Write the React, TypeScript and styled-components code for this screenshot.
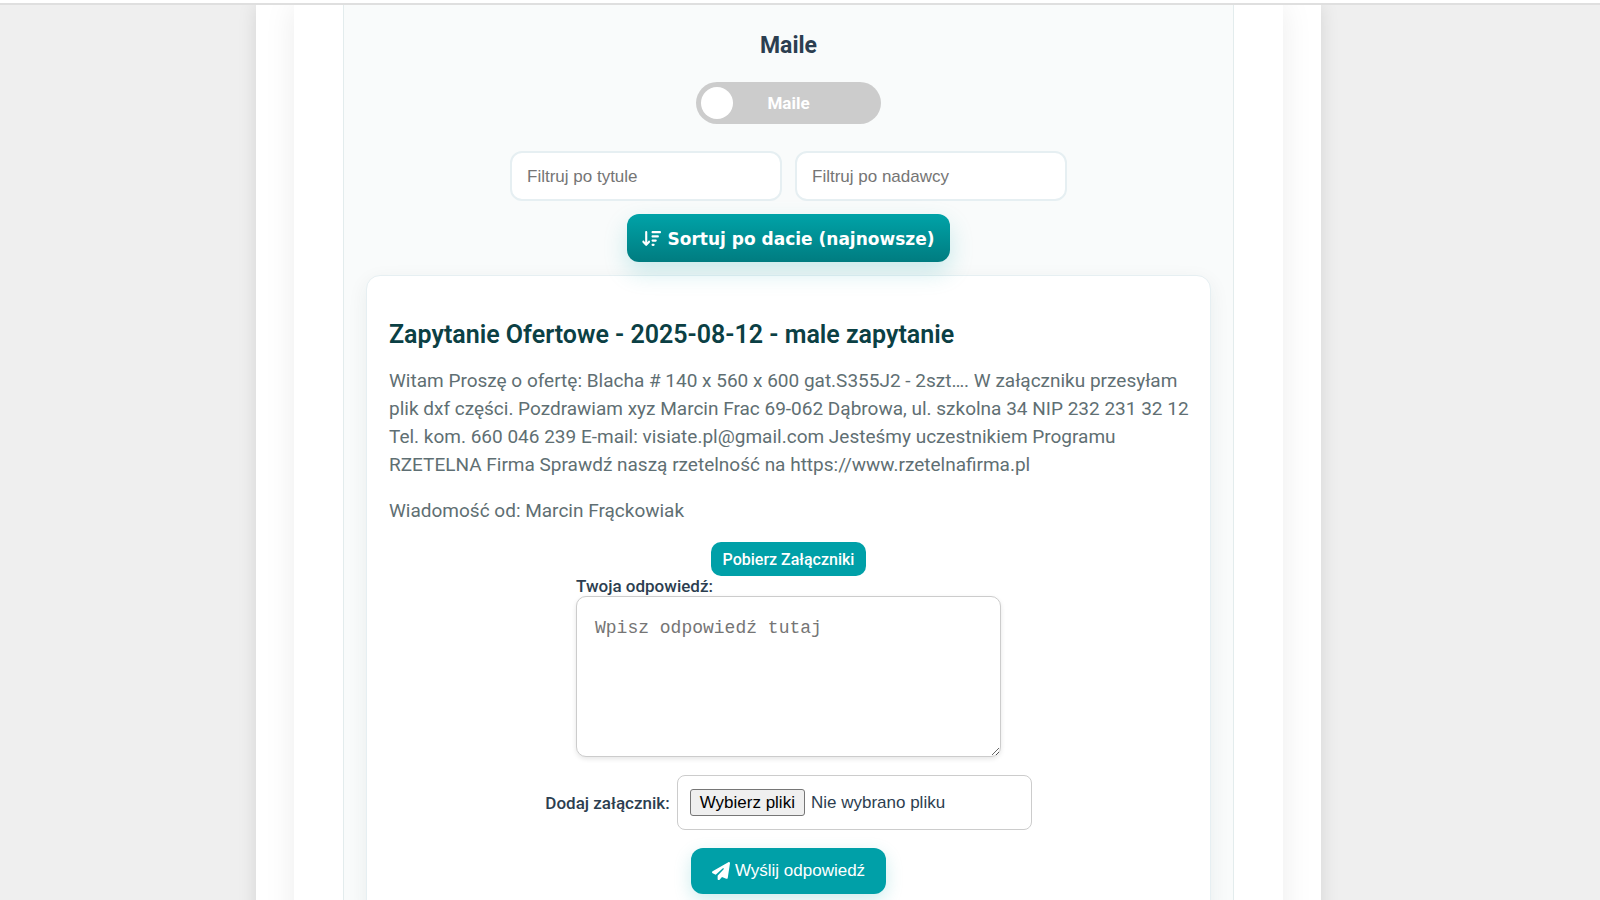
import React, { useState } from "react";
import styled, { createGlobalStyle } from "styled-components";
import { FaPaperPlane } from "react-icons/fa6";

const GlobalStyle = createGlobalStyle`
  *, *::before, *::after { box-sizing: border-box; }
  body {
    margin: 0;
    background: #efefef;
    color: #2c3e50;
    font-family: Roboto, "Liberation Sans", sans-serif;
    font-size: 17px;
    line-height: 20px;
  }
`;

const TopBar = styled.header`
  position: sticky;
  top: 0;
  z-index: 10;
  height: 5px;
  background: #fff;
  border-bottom: 2px solid #dfdfdf;
`;

const Page = styled.div`
  padding-right: 23px;
`;

const Shell = styled.div`
  max-width: 1065px;
  margin: 0 auto;
  padding: 0 38px;
  background: #fff;
  box-shadow: 0 0 18px rgba(0, 0, 0, 0.11);
  overflow: clip;
  overflow-clip-margin: 20px;
`;

const Content = styled.main`
  padding: 0 49px;
  background: #fff;
  box-shadow: 0 0 30px rgba(0, 0, 0, 0.08);
`;

const MailPanel = styled.section`
  display: flex;
  flex-direction: column;
  align-items: center;
  padding: 24px 22px;
  background: #f9fbfb;
  border: solid #e3eced;
  border-width: 0 1px;
`;

const PanelTitle = styled.h2`
  margin: 0 0 19px;
  font-size: 23px;
  line-height: 34px;
  font-weight: 700;
`;

const Toggle = styled.label`
  display: grid;
  align-items: center;
  width: 185px;
  height: 42px;
  margin-bottom: 27px;
  padding: 0 5px;
  border-radius: 21px;
  background: #ccc;
  color: #fff;
  font-weight: 700;
  cursor: pointer;
`;

const ToggleInput = styled.input`
  grid-area: 1 / 1;
  appearance: none;
  width: 32px;
  height: 32px;
  margin: 0;
  border-radius: 50%;
  background: #fff;
  cursor: pointer;

  &:checked {
    justify-self: end;
  }
`;

const ToggleText = styled.span`
  grid-area: 1 / 1;
  justify-self: center;
`;

const Filters = styled.div`
  display: flex;
  flex-wrap: wrap;
  justify-content: center;
  gap: 13px;
  margin-bottom: 13px;
`;

const FilterInput = styled.input`
  width: 272px;
  height: 50px;
  padding: 1px 15px 0;
  border: 2px solid #e6eff2;
  border-radius: 12px;
  background: #fff;
  font-family: "Liberation Sans", Arial, sans-serif;
  font-size: 17px;

  &::placeholder {
    color: #757575;
  }
`;

const SortButton = styled.button`
  position: relative;
  display: inline-flex;
  align-items: center;
  justify-content: center;
  gap: 6px;
  height: 48px;
  margin-bottom: 13px;
  padding: 1px 15px 0;
  border: 0;
  border-radius: 12px;
  background: linear-gradient(180deg, #00a3a8, #007c80);
  box-shadow: 0 10px 24px rgba(0, 163, 168, 0.2);
  color: #fff;
  font-family: "Arial Black", "DejaVu Sans", sans-serif;
  font-size: 17px;
  font-weight: 900;
  cursor: pointer;
`;

const MailCard = styled.article`
  width: 100%;
  padding: 42px 18px 24px;
  border: 1px solid #e6eff2;
  border-radius: 14px;
  background: #fff;
  box-shadow: 0 6px 20px rgba(0, 60, 60, 0.07);
`;

const MailTitle = styled.h3`
  margin: 0 0 15px;
  padding-left: 4px;
  color: #0b4044;
  font-size: 25px;
  line-height: 34px;
  font-weight: 600;
`;

const MailText = styled.p`
  margin: 0 0 18px;
  padding-left: 4px;
  color: #5f6f73;
  font-size: 19px;
  line-height: 28px;

  & + & {
    margin-bottom: 17px;
  }
`;

const ReplyForm = styled.form`
  display: flex;
  flex-direction: column;
  align-items: center;
`;

const DownloadButton = styled.button`
  height: 34px;
  padding: 0 12px;
  border: 0;
  border-radius: 10px;
  background: #00a0a8;
  color: #fff;
  font-family: inherit;
  font-size: 16px;
  font-weight: 500;
  cursor: pointer;
`;

const ReplyField = styled.div`
  display: flex;
  flex-direction: column;
  width: 425px;
  max-width: 100%;
  margin-bottom: 18px;
`;

const FieldLabel = styled.label`
  font-weight: 500;
`;

const ReplyArea = styled.textarea`
  display: block;
  width: 100%;
  height: 161px;
  padding: 20px 18px;
  border: 1px solid #ccc;
  border-radius: 10px;
  background: #fff;
  box-shadow: 0 2px 5px rgba(0, 0, 0, 0.1);
  font-family: Consolas, "Liberation Mono", monospace;
  font-size: 18px;
  line-height: 22px;
  resize: both;

  &::placeholder {
    color: #757575;
  }
`;

const FileRow = styled.div`
  display: flex;
  align-items: center;
  gap: 7px;
  margin-bottom: 18px;
`;

const FileBox = styled.div`
  position: relative;
  display: flex;
  align-items: center;
  gap: 6px;
  width: 355px;
  height: 55px;
  padding: 0 12px;
  border: 1px solid #ccc;
  border-radius: 8px;
  background: #fff;
  font-family: "Liberation Sans", Arial, sans-serif;
`;

const FileInput = styled.input`
  position: absolute;
  inset: 0;
  width: 100%;
  height: 100%;
  opacity: 0;
  cursor: pointer;
`;

const FileButton = styled.span`
  padding: 3px 9px;
  border: 1px solid #767676;
  border-radius: 3px;
  background: #efefef;
  color: #000;
  line-height: 19px;
`;

const SendButton = styled.button`
  display: inline-flex;
  align-items: center;
  gap: 5px;
  height: 46px;
  padding: 0 21px;
  border: 0;
  border-radius: 12px;
  background: #00a0a8;
  box-shadow: 0 6px 18px rgba(0, 163, 168, 0.2);
  color: #fff;
  font-family: "Liberation Sans", Arial, sans-serif;
  font-size: 17px;
  cursor: pointer;
`;

function SortIcon() {
  return (
    <svg width="19" height="17" viewBox="0 0 576 512" fill="currentColor" aria-hidden="true">
      <path d="M416 288h-95.1c-17.67 0-32 14.33-32 32s14.33 32 32 32H416c17.67 0 32-14.33 32-32S433.7 288 416 288zM544 32h-223.1c-17.67 0-32 14.33-32 32s14.33 32 32 32H544c17.67 0 32-14.33 32-32S561.7 32 544 32zM352 416h-32c-17.67 0-32 14.33-32 32s14.33 32 32 32h32c17.67 0 32-14.33 32-32S369.7 416 352 416zM480 160h-159.1c-17.67 0-32 14.33-32 32s14.33 32 32 32H480c17.67 0 32-14.33 32-32S497.7 160 480 160zM192.4 330.7L160 366.1V64.03C160 46.33 145.7 32 128 32S96 46.33 96 64.03v302L63.6 330.7c-6.312-6.883-14.94-10.38-23.61-10.38c-7.719 0-15.47 2.781-21.61 8.414c-13.03 11.95-13.9 32.22-1.969 45.27l87.1 96.09c12.12 13.26 35.06 13.26 47.19 0l87.1-96.09c11.94-13.05 11.06-33.31-1.969-45.27C224.6 316.8 204.4 317.7 192.4 330.7z" />
    </svg>
  );
}

export default function App() {
  const [files, setFiles] = useState("Nie wybrano pliku");

  return (
    <>
      <GlobalStyle />
      <TopBar />
      <Page>
        <Shell>
          <Content>
            <MailPanel>
              <PanelTitle>Maile</PanelTitle>
              <Toggle>
                <ToggleInput type="checkbox" />
                <ToggleText>Maile</ToggleText>
              </Toggle>
              <Filters>
                <FilterInput type="text" aria-label="Filtruj po tytule" placeholder="Filtruj po tytule" />
                <FilterInput type="text" aria-label="Filtruj po nadawcy" placeholder="Filtruj po nadawcy" />
              </Filters>
              <SortButton type="button">
                <SortIcon />
                Sortuj po dacie (najnowsze)
              </SortButton>
              <MailCard>
                <MailTitle>Zapytanie Ofertowe - 2025-08-12 - male zapytanie</MailTitle>
                <MailText>
                  Witam Proszę o ofertę: Blacha # 140 x 560 x 600 gat.S355J2 - 2szt…. W załączniku przesyłam plik dxf
                  części. Pozdrawiam xyz Marcin Frac 69-062 Dąbrowa, ul. szkolna 34 NIP 232 231 32 12 Tel. kom. 660 046
                  239 E-mail: visiate.pl@gmail.com Jesteśmy uczestnikiem Programu RZETELNA Firma Sprawdź naszą
                  rzetelność na https://www.rzetelnafirma.pl
                </MailText>
                <MailText>Wiadomość od: Marcin Frąckowiak</MailText>
                <ReplyForm onSubmit={(event) => event.preventDefault()}>
                  <DownloadButton type="button">Pobierz Załączniki</DownloadButton>
                  <ReplyField>
                    <FieldLabel htmlFor="reply">Twoja odpowiedź:</FieldLabel>
                    <ReplyArea id="reply" placeholder="Wpisz odpowiedź tutaj" />
                  </ReplyField>
                  <FileRow>
                    <FieldLabel htmlFor="attachments">Dodaj załącznik:</FieldLabel>
                    <FileBox>
                      <FileButton aria-hidden>Wybierz pliki</FileButton>
                      <span>{files}</span>
                      <FileInput
                        id="attachments"
                        type="file"
                        multiple
                        onChange={(event) => {
                          const names = Array.from(event.target.files ?? []).map((file) => file.name);
                          setFiles(names.join(", ") || "Nie wybrano pliku");
                        }}
                      />
                    </FileBox>
                  </FileRow>
                  <SendButton type="submit">
                    <FaPaperPlane size={18} aria-hidden />
                    Wyślij odpowiedź
                  </SendButton>
                </ReplyForm>
              </MailCard>
            </MailPanel>
          </Content>
        </Shell>
      </Page>
    </>
  );
}
